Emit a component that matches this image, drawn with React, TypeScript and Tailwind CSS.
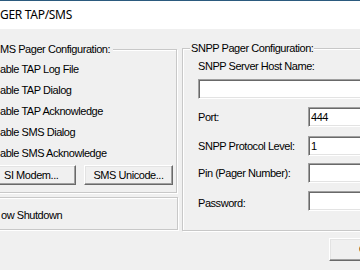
import React from "react";

const etched = "border border-[#c8c8c8] shadow-[inset_1px_1px_0_#ffffff,1px_1px_0_#ffffff]";
const sunken =
  "bg-white border border-t-[#a0a0a0] border-l-[#a0a0a0] border-b-white border-r-white shadow-[inset_1px_1px_0_#696969,inset_-1px_-1px_0_#e3e3e3]";
const raised =
  "bg-[#f0f0f0] border border-t-white border-l-white border-b-[#696969] border-r-[#696969] shadow-[inset_-1px_-1px_0_#a0a0a0,inset_1px_1px_0_#e3e3e3]";

function Row({ label, value, mt, labelPt = 0 }: { label: string; value?: string; mt: string; labelPt?: number }) {
  return (
    <div className={`flex items-center h-[20px] ${mt}`}>
      <div className="w-[110px] leading-[13px]" style={{ paddingTop: labelPt }}>
        {label}
      </div>
      <div className={`w-[90px] h-[20px] ${sunken} flex items-center pl-[2px] leading-[13px]`}>{value}</div>
    </div>
  );
}

export default function App() {
  return (
    <div
      className="w-[360px] h-[270px] overflow-hidden bg-[#f0f0f0] flex flex-col text-[11px] tracking-[-0.45px] text-black"
      style={{ fontFamily: '"Liberation Sans", Arial, sans-serif' }}
    >
      <div className="h-px bg-[#2b5a7e] shrink-0" />
      <div
        className="h-[28px] bg-white flex items-center shrink-0 text-[12px] tracking-[-0.3px]"
        style={{ fontFamily: '"Noto Sans", "Segoe UI", sans-serif' }}
      >
        GER TAP/SMS
      </div>
      <div className="flex pt-[20px] shrink-0">
        {/* Left column */}
        <div className="w-[178px] flex flex-col shrink-0">
          <div className={`-ml-[10px] w-[187px] ${etched} pb-[7px]`}>
            <div className="-mt-[7px] leading-[13px] pl-[9px]">
              <span className="bg-[#f0f0f0] pr-[3px]">MS Pager Configuration:</span>
            </div>
            <div className="pt-[3px] pl-[9px]">
              {["able TAP Log File", "able TAP Dialog", "able TAP Acknowledge", "able SMS Dialog", "able SMS Acknowledge"].map(
                (t) => (
                  <div key={t} className="h-[21px] flex items-center leading-[13px]">
                    {t}
                  </div>
                )
              )}
            </div>
            <div className="flex mt-[1px] gap-[8px]">
              <div className={`w-[85px] h-[20px] ${raised} flex items-center pl-[12px] leading-[13px]`}>SI Modem...</div>
              <div className={`w-[89px] h-[20px] ${raised} flex items-center justify-center leading-[13px]`}>
                SMS Unicode...
              </div>
            </div>
          </div>
          <div className={`-ml-[10px] w-[188px] h-[33px] mt-[4px] ${etched} flex items-center pl-[10px] pt-[3px] leading-[13px]`}>
            ow Shutdown
          </div>
        </div>
        {/* Right column */}
        <div className={`ml-[4px] -mt-px w-[220px] shrink-0 ${etched} pb-[19px] h-[183px]`}>
          <div className="-mt-[7px] leading-[13px] pl-[7px]">
            <span className="bg-[#f0f0f0] px-[1px]">SNPP Pager Configuration:</span>
          </div>
          <div className="pl-[15px]">
            <div className="mt-[5px] leading-[13px]">SNPP Server Host Name:</div>
            <div className={`mt-[6px] w-[200px] h-[20px] ${sunken}`} />
            <Row label="Port:" value="444" mt="mt-[8px]" />
            <Row label="SNPP Protocol Level:" value="1" mt="mt-[9px]" />
            <Row label="Pin (Pager Number):" mt="mt-[7px]" />
            <Row label="Password:" mt="mt-[8px]" labelPt={5} />
          </div>
        </div>
      </div>
      <div className="pl-[329px] pt-[7px] shrink-0">
        <div className={`w-[75px] h-[23px] ${raised} flex items-center justify-center leading-[13px]`}>OK</div>
      </div>
    </div>
  );
}
